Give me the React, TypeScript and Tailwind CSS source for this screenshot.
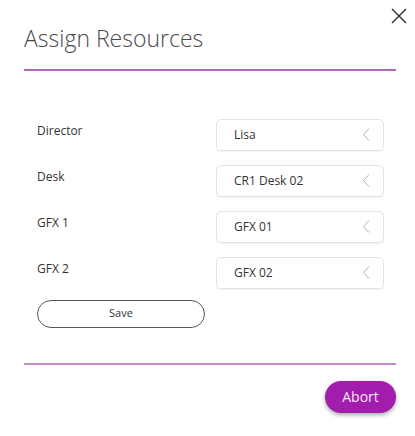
import React from "react";

const rows = [
  { label: "Director", value: "Lisa" },
  { label: "Desk", value: "CR1 Desk 02" },
  { label: "GFX 1", value: "GFX 01" },
  { label: "GFX 2", value: "GFX 02" },
];

function Chevron() {
  return (
    <svg width="8" height="13" viewBox="0 0 8 13" fill="none">
      <path d="M7 0.5 L1.5 6.5 L7 12.5" stroke="#b0b0b0" strokeWidth="1" />
    </svg>
  );
}

export default function App() {
  return (
    <div
      className="relative w-[415px] h-[436px] bg-white flex flex-col text-[#333]"
      style={{ fontFamily: '"Open Sans", "Noto Sans", sans-serif' }}
    >
      {/* Close */}
      <button className="absolute top-[8px] right-[8px] w-[16px] h-[16px]">
        <svg width="16" height="16" viewBox="0 0 16 16" fill="none">
          <path d="M1 1 L15 15 M15 1 L1 15" stroke="#2a2a2a" strokeWidth="1.4" />
        </svg>
      </button>

      {/* Header */}
      <div className="pl-6 pr-[19px] pt-[23px]">
        <h1 className="text-[23px] font-light leading-[30px] text-[#4a4a4a]">
          Assign Resources
        </h1>
        <div className="mt-[16px] h-[1.5px] bg-[#b565b9]" />
      </div>

      {/* Body */}
      <div className="px-[37px] pt-[48px] flex flex-col gap-[14px]">
        {rows.map((r) => (
          <div key={r.label} className="flex items-start">
            <div className="w-[179px] shrink-0 pt-[3px] text-[12px] leading-[18px] text-[#333]">
              {r.label}
            </div>
            <div className="w-[168px] shrink-0 h-[32px] flex items-center justify-between pl-[17px] pr-[13px] border border-[#e4e4e4] rounded-[5px] shadow-[0_1px_2px_rgba(0,0,0,0.06)] bg-white">
              <span className="text-[12px] text-[#333]">{r.value}</span>
              <Chevron />
            </div>
          </div>
        ))}
        <button className="mt-[-3px] w-[168px] h-[28px] rounded-full border-[1.5px] border-[#555] text-[11px] text-[#333] bg-white">
          Save
        </button>
      </div>

      {/* Footer */}
      <div className="pl-6 pr-[19px] mt-[35px]">
        <div className="h-[2px] bg-[#c68dc8]" />
        <div className="flex justify-end pt-[16px]">
          <button className="w-[71px] h-[32px] rounded-full bg-[#a31dad] text-[14px] text-[#f6e8f6] shadow-[0_2px_4px_rgba(0,0,0,0.35)]">
            Abort
          </button>
        </div>
      </div>
    </div>
  );
}
